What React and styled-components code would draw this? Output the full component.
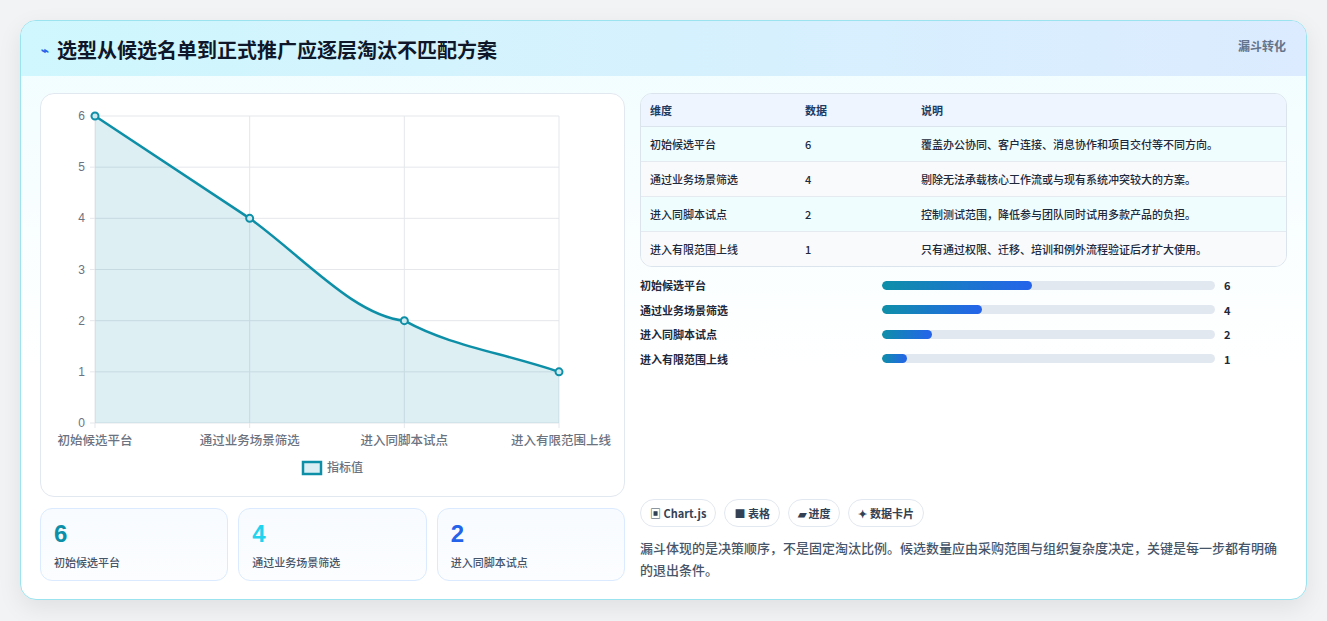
import React from "react";
import styled, { createGlobalStyle } from "styled-components";

const GlobalStyle = createGlobalStyle`
  body { margin: 0; background: #f1f3f5; font-family: "Noto Sans CJK SC", "Noto Sans", sans-serif; }
`;

const stages = [
  { name: "初始候选平台", value: 6, note: "覆盖办公协同、客户连接、消息协作和项目交付等不同方向。" },
  { name: "通过业务场景筛选", value: 4, note: "剔除无法承载核心工作流或与现有系统冲突较大的方案。" },
  { name: "进入同脚本试点", value: 2, note: "控制测试范围，降低参与团队同时试用多款产品的负担。" },
  { name: "进入有限范围上线", value: 1, note: "只有通过权限、迁移、培训和例外流程验证后才扩大使用。" },
];

const statColors = ["#0e8fa8", "#22d3ee", "#2563eb"];

export default function App() {
  return (
    <>
      <GlobalStyle />
      <Page>
        <Card>
          <Header>
            <Title>
              <Bolt>⌁</Bolt>选型从候选名单到正式推广应逐层淘汰不匹配方案
            </Title>
            <Tag>漏斗转化</Tag>
          </Header>
          <Body>
            <Left>
              <ChartPanel>
                <FunnelChart />
              </ChartPanel>
              <Stats>
                {stages.slice(0, 3).map((s, i) => (
                  <Stat key={s.name}>
                    <StatNum color={statColors[i]}>{s.value}</StatNum>
                    <StatLabel>{s.name}</StatLabel>
                  </Stat>
                ))}
              </Stats>
            </Left>
            <Right>
              <Table>
                <thead>
                  <tr>
                    <Th style={{ width: 137 }}>维度</Th>
                    <Th style={{ width: 98 }}>数据</Th>
                    <Th>说明</Th>
                  </tr>
                </thead>
                <tbody>
                  {stages.map((s, i) => (
                    <Tr key={s.name} odd={i % 2 === 1}>
                      <Td>{s.name}</Td>
                      <Td>{s.value}</Td>
                      <Td>{s.note}</Td>
                    </Tr>
                  ))}
                </tbody>
              </Table>
              <Bars>
                {stages.map((s) => (
                  <BarRow key={s.name}>
                    <BarLabel>{s.name}</BarLabel>
                    <Track>
                      <Fill style={{ width: `${(s.value / 6) * 45}%` }} />
                    </Track>
                    <BarVal>{s.value}</BarVal>
                  </BarRow>
                ))}
              </Bars>
              <Spacer />
              <Chips>
                <Chip>▣ Chart.js</Chip>
                <Chip>■ 表格</Chip>
                <Chip>▰ 进度</Chip>
                <Chip>✦ 数据卡片</Chip>
              </Chips>
              <Note>
                漏斗体现的是决策顺序，不是固定淘汰比例。候选数量应由采购范围与组织复杂度决定，关键是每一步都有明确的退出条件。
              </Note>
            </Right>
          </Body>
        </Card>
      </Page>
    </>
  );
}

function FunnelChart() {
  const x0 = 54, x1 = 518, y0 = 22, y1 = 329;
  const xs = [0, 1, 2, 3].map((i) => x0 + ((x1 - x0) / 3) * i);
  const yv = (v) => y1 - ((y1 - y0) / 6) * v;
  const pts = stages.map((s, i) => [xs[i], yv(s.value)]);
  const line = `M${pts[0][0]},${pts[0][1]} L${pts[1][0]},${pts[1][1]} C${pts[1][0] + 55},${pts[1][1] + 40} ${pts[2][0] - 50},${pts[2][1] - 5} ${pts[2][0]},${pts[2][1]} C${pts[2][0] + 45},${pts[2][1] + 25} ${pts[3][0] - 60},${pts[3][1] - 20} ${pts[3][0]},${pts[3][1]}`;
  return (
    <svg width="585" height="402" style={{ display: "block" }}>
      {[0, 1, 2, 3, 4, 5, 6].map((v) => (
        <g key={v}>
          <line x1={x0 - 5} x2={x1} y1={yv(v)} y2={yv(v)} stroke="#e5e7eb" />
          <text x={x0 - 10} y={yv(v) + 4} fontSize="12" fill="#6b7280" textAnchor="end" fontFamily="Liberation Sans, sans-serif">{v}</text>
        </g>
      ))}
      {xs.map((x) => (
        <line key={x} x1={x} x2={x} y1={y0} y2={y1 + 5} stroke="#e5e7eb" />
      ))}
      <path d={`${line} L${x1},${y1} L${x0},${y1} Z`} fill="rgba(14,143,168,0.14)" />
      <path d={line} fill="none" stroke="#0e8fa8" strokeWidth="2.5" />
      {pts.map(([x, y], i) => (
        <circle key={i} cx={x} cy={y} r="3.5" fill="#cfe9ef" stroke="#0e8fa8" strokeWidth="2" />
      ))}
      {stages.map((s, i) => (
        <text key={s.name} x={i === 3 ? 570 : i === 0 ? 54 : xs[i]} y={351} fontSize="12.5" fontWeight="500" fill="#6b7280" textAnchor={i === 3 ? "end" : "middle"}>{s.name}</text>
      ))}
      <rect x="262" y="368" width="18" height="12" fill="#dbeef4" stroke="#0e8fa8" strokeWidth="2.5" />
      <text x="286" y="378" fontSize="12" fontWeight="500" fill="#6b7280">指标值</text>
    </svg>
  );
}

const Page = styled.div`
  padding: 20px 20px 21px 20px;
`;
const Card = styled.div`
  border: 1px solid #9be3ef;
  border-radius: 16px;
  background: linear-gradient(180deg, #f0fdff 0%, #ffffff 60%);
  box-shadow: 0 8px 24px rgba(0,0,0,0.08);
  overflow: hidden;
`;
const Header = styled.div`
  height: 55px;
  display: flex;
  justify-content: space-between;
  align-items: flex-start;
  padding: 0 20px;
  background: linear-gradient(90deg, #cff7fd 0%, #dcebff 100%);
`;
const Title = styled.h1`
  margin: 14px 0 0;
  font-size: 20px;
  font-weight: 700;
  color: #0f172a;
  display: flex;
  align-items: center;
`;
const Bolt = styled.span`
  color: #2563eb;
  font-size: 13px;
  margin-right: 8px;
`;
const Tag = styled.span`
  margin-top: 16px;
  font-size: 12px;
  font-weight: 700;
  color: #64748b;
`;
const Body = styled.div`
  display: grid;
  grid-template-columns: 585px 647px;
  gap: 15px;
  padding: 17px 19px 18px 19px;
`;
const Left = styled.div`
  display: flex;
  flex-direction: column;
  gap: 11px;
`;
const ChartPanel = styled.div`
  height: 402px;
  border: 1px solid #e2e8f0;
  border-radius: 14px;
  background: #fff;
  overflow: hidden;
`;
const Stats = styled.div`
  display: grid;
  grid-template-columns: repeat(3, 1fr);
  gap: 10px;
`;
const Stat = styled.div`
  height: 73px;
  box-sizing: border-box;
  border: 1px solid #dbeafe;
  border-radius: 12px;
  background: linear-gradient(180deg, #f8fbff, #fbfdff);
  padding: 11px 13px;
`;
const StatNum = styled.div`
  font-family: "Liberation Sans", sans-serif;
  font-size: 24px;
  font-weight: 900;
  color: ${(p) => p.color};
  line-height: 28px;
`;
const StatLabel = styled.div`
  margin-top: 6px;
  font-size: 11px;
  font-weight: 500;
  color: #475569;
`;
const Right = styled.div`
  display: flex;
  flex-direction: column;
`;
const Table = styled.table`
  width: 100%;
  border-collapse: separate;
  border-spacing: 0;
  border: 1px solid #dbe3ec;
  border-radius: 12px;
  overflow: hidden;
  font-size: 11px;
`;
const Th = styled.th`
  text-align: left;
  height: 32px;
  padding: 0 9px;
  background: #eef5ff;
  color: #1e3a5f;
  font-weight: 700;
  border-bottom: 1px solid #dbe3ec;
`;
const Tr = styled.tr`
  background: ${(p) => (p.odd ? "#f8fafc" : "#f0fdff")};
  td { border-top: 1px solid #e5eaf0; }
  &:first-child td { border-top: none; }
`;
const Td = styled.td`
  height: 34px;
  padding: 0 9px;
  color: #1e293b;
  font-weight: 500;
`;
const Bars = styled.div`
  margin-top: 10px;
  display: flex;
  flex-direction: column;
  gap: 10.5px;
`;
const BarRow = styled.div`
  display: grid;
  grid-template-columns: 233px 333px auto;
  align-items: center;
  column-gap: 9px;
  font-size: 11px;
  font-weight: 700;
  color: #1e293b;
  height: 14px;
`;
const BarLabel = styled.span``;
const Track = styled.div`
  height: 9px;
  border-radius: 5px;
  background: #e2e8f0;
  overflow: hidden;
`;
const Fill = styled.div`
  height: 100%;
  border-radius: 5px;
  background: linear-gradient(90deg, #0e8fa8, #2563eb);
`;
const BarVal = styled.span``;
const Spacer = styled.div`
  flex: 1;
`;
const Chips = styled.div`
  display: flex;
  gap: 8px;
`;
const Chip = styled.span`
  height: 28px;
  box-sizing: border-box;
  display: inline-flex;
  align-items: center;
  padding: 0 9px;
  border: 1px solid #e2e8f0;
  border-radius: 14px;
  background: #fff;
  font-size: 11px;
  font-weight: 700;
  color: #334155;
`;
const Note = styled.p`
  margin: 10px 0 0;
  font-size: 13px;
  line-height: 22px;
  color: #475569;
  font-weight: 500;
`;
